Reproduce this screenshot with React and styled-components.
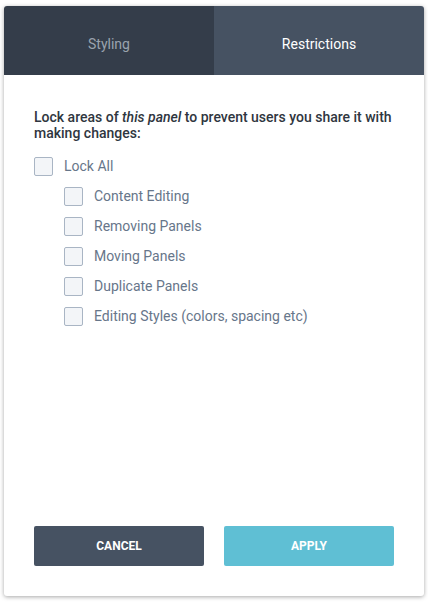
import React from 'react';
import styled, { createGlobalStyle } from 'styled-components';

const GlobalStyle = createGlobalStyle`
  body {
    margin: 0;
    background: #fff;
    font-family: Roboto, "Liberation Sans", sans-serif;
  }
`;

const Page = styled.div`
  padding: 6px 4px 6px 4px;
`;

const Panel = styled.div`
  display: flex;
  flex-direction: column;
  height: 590px;
  background: #fff;
  border-radius: 3px;
  overflow: hidden;
  box-shadow: 0 1px 4px rgba(0, 0, 0, 0.35);
`;

const Tabs = styled.div`
  display: grid;
  grid-template-columns: 210px 1fr;
  height: 69px;
`;

const Tab = styled.div`
  display: flex;
  align-items: center;
  justify-content: center;
  padding-top: 6px;
  font-size: 14px;
  background: ${p => (p.$active ? '#465262' : '#343d4a')};
  color: ${p => (p.$active ? '#ffffff' : '#9aa3ae')};
`;

const Body = styled.div`
  flex: 1;
  padding: 34px 30px 0 30px;
`;

const Intro = styled.p`
  margin: 0 0 10px 0;
  font-size: 14px;
  font-weight: 500;
  line-height: 16px;
  color: #2f3640;
`;

const List = styled.div`
  display: flex;
  flex-direction: column;
`;

const Row = styled.label`
  display: flex;
  align-items: center;
  gap: 11px;
  height: 30px;
  padding-left: ${p => (p.$nested ? '30px' : '0')};
  font-size: 14px;
  color: #67768a;
  cursor: pointer;
`;

const Box = styled.span`
  width: 17px;
  height: 17px;
  border: 1px solid #a9b5c4;
  border-radius: 2px;
  background: #f3f5f8;
  flex: 0 0 auto;
`;

const Footer = styled.div`
  display: grid;
  grid-template-columns: 1fr 1fr;
  gap: 20px;
  padding: 0 30px 30px 30px;
`;

const Button = styled.button`
  height: 40px;
  border: none;
  border-radius: 2px;
  font-family: Roboto, "Liberation Sans", sans-serif;
  font-size: 12px;
  font-weight: 700;
  text-transform: uppercase;
  color: #fff;
  background: ${p => (p.$primary ? '#5fbfd4' : '#465262')};
  cursor: pointer;
`;

const items = [
  'Content Editing',
  'Removing Panels',
  'Moving Panels',
  'Duplicate Panels',
  'Editing Styles (colors, spacing etc)',
];

export default function App() {
  return (
    <Page>
      <GlobalStyle />
      <Panel>
        <Tabs>
          <Tab>Styling</Tab>
          <Tab $active>Restrictions</Tab>
        </Tabs>
        <Body>
          <Intro>
            Lock areas of <em>this panel</em> to prevent users you share it with making changes:
          </Intro>
          <List>
            <Row>
              <Box />
              Lock All
            </Row>
            {items.map(item => (
              <Row $nested key={item}>
                <Box />
                {item}
              </Row>
            ))}
          </List>
        </Body>
        <Footer>
          <Button>Cancel</Button>
          <Button $primary>Apply</Button>
        </Footer>
      </Panel>
    </Page>
  );
}
